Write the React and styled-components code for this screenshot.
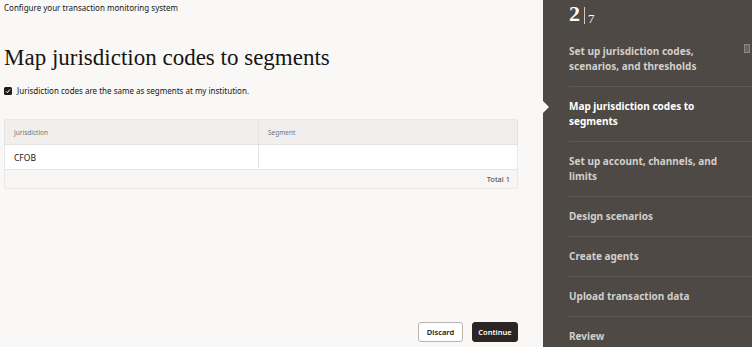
import React from "react";
import styled, { createGlobalStyle } from "styled-components";

const Global = createGlobalStyle`
  html, body { margin: 0; padding: 0; }
  body { width: 752px; height: 347px; overflow: hidden; background: #f9f8f6; }
  * { box-sizing: border-box; }
`;

const Page = styled.div`
  display: flex;
  width: 752px;
  height: 347px;
  font-family: "Noto Sans", "Open Sans", sans-serif;
  color: #161513;
`;

const Main = styled.main`
  flex: 0 0 543px;
  display: flex;
  flex-direction: column;
  padding: 2px 25px 5px 4px;
  background: #f9f8f6;
`;

const Kicker = styled.div`
  font-size: 8px;
  line-height: 12px;
`;

const Title = styled.h1`
  margin: 30px 0 0;
  font-family: "Liberation Serif", "DejaVu Serif", serif;
  font-weight: 400;
  font-size: 23px;
  line-height: 28px;
  color: #161513;
`;

const CheckRow = styled.label`
  display: flex;
  align-items: center;
  gap: 5px;
  margin-top: 13px;
  font-size: 8px;
  line-height: 12px;
`;

const Box = styled.span`
  width: 8px;
  height: 8px;
  border-radius: 1.5px;
  background: #1f1c1a;
  display: flex;
  align-items: center;
  justify-content: center;
`;

const Table = styled.div`
  margin-top: 22px;
  border: 1px solid #ebe9e6;
  border-radius: 2px;
  background: #f7f6f4;
`;

const Row = styled.div`
  display: grid;
  grid-template-columns: 253px 1fr;
  height: ${(p) => p.$h}px;
  background: ${(p) => p.$bg};
  border-bottom: 1px solid #e6e4e1;
  ${(p) => p.$shadow && "box-shadow: 0 1px 2px rgba(0,0,0,0.08);"}
`;

const Cell = styled.div`
  display: flex;
  align-items: center;
  padding-left: 9px;
  font-size: ${(p) => (p.$head ? "6.5px" : "8.5px")};
  color: ${(p) => (p.$head ? "#77736f" : "#161513")};
  & + & { border-left: 1px solid #e6e4e1; }
`;

const Footer = styled.div`
  height: 18px;
  display: flex;
  align-items: center;
  justify-content: flex-end;
  padding-right: 7px;
  font-size: 7.5px;
  color: #3a3734;
`;

const Actions = styled.div`
  margin-top: auto;
  display: flex;
  justify-content: flex-end;
  gap: 9px;
`;

const Button = styled.button`
  height: 20px;
  width: ${(p) => (p.$primary ? "46px" : "45px")};
  padding: 0;
  border-radius: 3px;
  font-family: "Noto Sans", "Open Sans", sans-serif;
  font-size: 7.5px;
  font-weight: 600;
  border: 1px solid ${(p) => (p.$primary ? "#2b2623" : "#b9b5b0")};
  background: ${(p) => (p.$primary ? "#2b2623" : "#ffffff")};
  color: ${(p) => (p.$primary ? "#ffffff" : "#161513")};
`;

const Side = styled.aside`
  flex: 1;
  position: relative;
  background: #4e4944;
  padding: 4px 0 0 26px;
  display: flex;
  flex-direction: column;
`;

const Counter = styled.div`
  display: flex;
  align-items: flex-end;
  height: 24px;
  font-family: "Liberation Serif", "DejaVu Serif", serif;
  color: #ffffff;
`;

const Big = styled.span`
  font-size: 22px;
  font-weight: 700;
  line-height: 20px;
`;

const Bar = styled.span`
  width: 1px;
  height: 17px;
  background: #cfcac4;
  margin: 0 3px 0 4px;
  align-self: flex-end;
`;

const Small = styled.span`
  font-size: 13px;
  line-height: 11px;
`;

const Steps = styled.ol`
  list-style: none;
  margin: 8px 0 0;
  padding: 0;
`;

const Step = styled.li`
  position: relative;
  padding: 12px 0 12px;
  border-bottom: ${(p) => (p.$last ? "none" : "1px solid #5d5853")};
  font-size: 10px;
  font-weight: 700;
  line-height: 15px;
  color: ${(p) => (p.$current ? "#ffffff" : "#d3cfca")};
`;

const Notch = styled.span`
  position: absolute;
  left: -26px;
  top: 14px;
  width: 0;
  height: 0;
  border-top: 6px solid transparent;
  border-bottom: 6px solid transparent;
  border-left: 6px solid #f9f8f6;
`;

const ScrollTab = styled.span`
  position: absolute;
  right: 2px;
  top: 44px;
  width: 6px;
  height: 9px;
  border: 1px solid #8d8781;
  background: #6a655f;
`;

const steps = [
  ["Set up jurisdiction codes,", "scenarios, and thresholds"],
  ["Map jurisdiction codes to", "segments"],
  ["Set up account, channels, and", "limits"],
  ["Design scenarios"],
  ["Create agents"],
  ["Upload transaction data"],
  ["Review"],
];

export default function App() {
  return (
    <Page>
      <Global />
      <Main>
        <Kicker>Configure your transaction monitoring system</Kicker>
        <Title>Map jurisdiction codes to segments</Title>
        <CheckRow>
          <Box>
            <svg width="6" height="6" viewBox="0 0 6 6">
              <path d="M1 3.2 L2.4 4.6 L5 1.4" fill="none" stroke="#fff" strokeWidth="1" />
            </svg>
          </Box>
          Jurisdiction codes are the same as segments at my institution.
        </CheckRow>
        <Table>
          <Row $h={25} $bg="#f1efed" $shadow>
            <Cell $head>Jurisdiction</Cell>
            <Cell $head>Segment</Cell>
          </Row>
          <Row $h={25} $bg="#ffffff">
            <Cell>CFOB</Cell>
            <Cell />
          </Row>
          <Footer>Total 1</Footer>
        </Table>
        <Actions>
          <Button>Discard</Button>
          <Button $primary>Continue</Button>
        </Actions>
      </Main>
      <Side>
        <ScrollTab />
        <Counter>
          <Big>2</Big>
          <Bar />
          <Small>7</Small>
        </Counter>
        <Steps>
          {steps.map((s, i) => (
            <Step key={i} $current={i === 1} $last={i === steps.length - 1}>
              {i === 1 && <Notch />}
              {s.map((l, j) => (
                <div key={j}>{l}</div>
              ))}
            </Step>
          ))}
        </Steps>
      </Side>
    </Page>
  );
}
